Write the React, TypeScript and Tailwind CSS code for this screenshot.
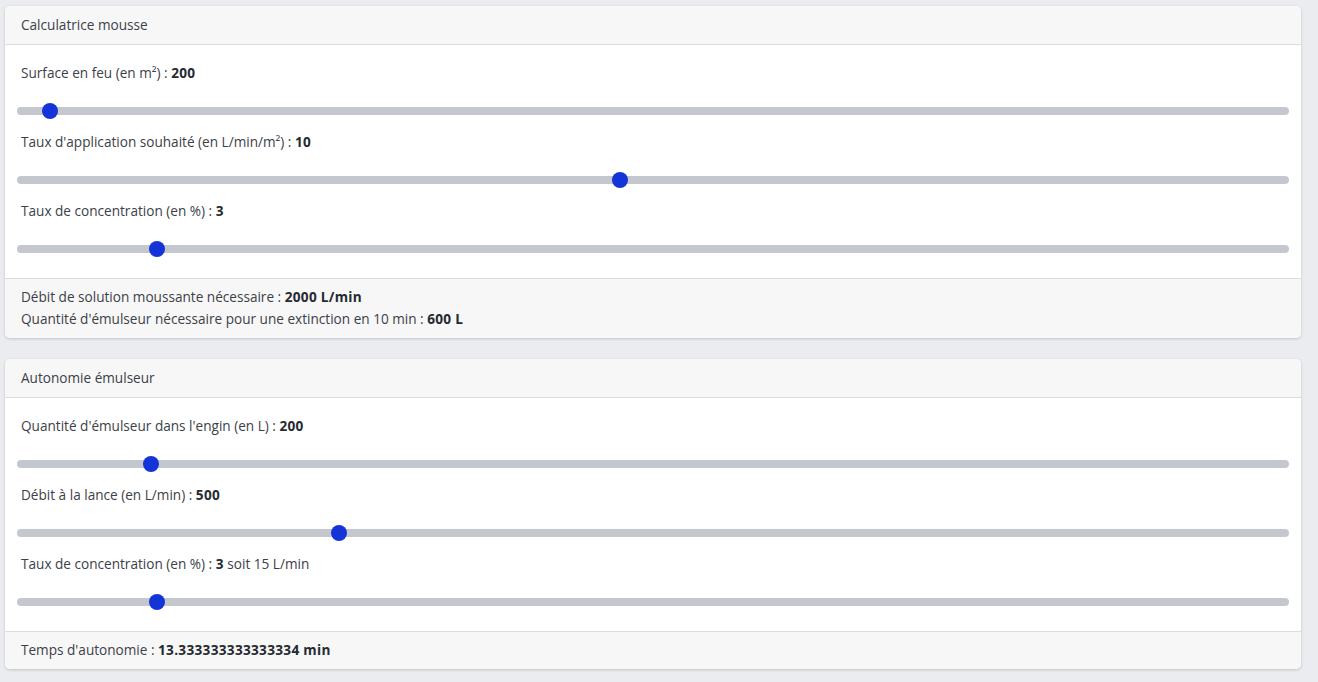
import React from 'react';

interface SliderRowProps {
  label: React.ReactNode;
  ratio: number;
}

function SliderRow({ label, ratio }: SliderRowProps) {
  return (
    <div className="mb-[13px] last:mb-0">
      <div className="px-[4px] h-[20px] leading-[20px]">{label}</div>
      <div className="relative mt-[20px] h-[16px] flex items-center">
        <div className="h-[8px] w-full rounded-full bg-[#c4c7cd]" />
        <div
          className="absolute top-0 h-[16px] w-[16px] rounded-full bg-[#1434d8]"
          style={{ left: `calc((100% - 16px) * ${ratio})` }}
        />
      </div>
    </div>
  );
}

function Card({ title, rows, footer }: { title: string; rows: SliderRowProps[]; footer: React.ReactNode }) {
  return (
    <div className="rounded-[5px] bg-white shadow-[0_1px_3px_rgba(0,0,0,0.18)] overflow-hidden">
      <div className="h-[39px] flex items-center px-[16px] bg-[#f7f7f7] border-b border-[#dcdcdc]">{title}</div>
      <div className="px-[12px] pt-[18px] pb-[21px]">
        {rows.map((r, i) => (
          <SliderRow key={i} {...r} />
        ))}
      </div>
      <div className="px-[16px] pt-[7px] pb-[8px] bg-[#f7f7f7] border-t border-[#dcdcdc] leading-[22px]">{footer}</div>
    </div>
  );
}

export default function App() {
  const b = 'font-bold text-[#262a31] tracking-[0.3px]';
  return (
    <div
      className="min-h-[682px] bg-[#ebecef] pl-[5px] pr-[17px] pt-[6px] pb-[12px] flex flex-col gap-[21px] text-[13.6px] text-[#3c4148]"
      style={{ fontFamily: '"Open Sans", "Noto Sans", sans-serif' }}
    >
      <Card
        title="Calculatrice mousse"
        rows={[
          { label: <>Surface en feu (en m²) : <span className={b}>200</span></>, ratio: 0.02 },
          { label: <>Taux d'application souhaité (en L/min/m²) : <span className={b}>10</span></>, ratio: 9 / 19 },
          { label: <>Taux de concentration (en %) : <span className={b}>3</span></>, ratio: 2 / 19 },
        ]}
        footer={
          <>
            <div>Débit de solution moussante nécessaire : <span className={b}>2000 L/min</span></div>
            <div>Quantité d'émulseur nécessaire pour une extinction en 10 min : <span className={b}>600 L</span></div>
          </>
        }
      />
      <Card
        title="Autonomie émulseur"
        rows={[
          { label: <>Quantité d'émulseur dans l'engin (en L) : <span className={b}>200</span></>, ratio: 0.1 },
          { label: <>Débit à la lance (en L/min) : <span className={b}>500</span></>, ratio: 0.25 },
          { label: <>Taux de concentration (en %) : <span className={b}>3</span> soit 15 L/min</>, ratio: 2 / 19 },
        ]}
        footer={<div>Temps d'autonomie : <span className={b}>13.333333333333334 min</span></div>}
      />
    </div>
  );
}
